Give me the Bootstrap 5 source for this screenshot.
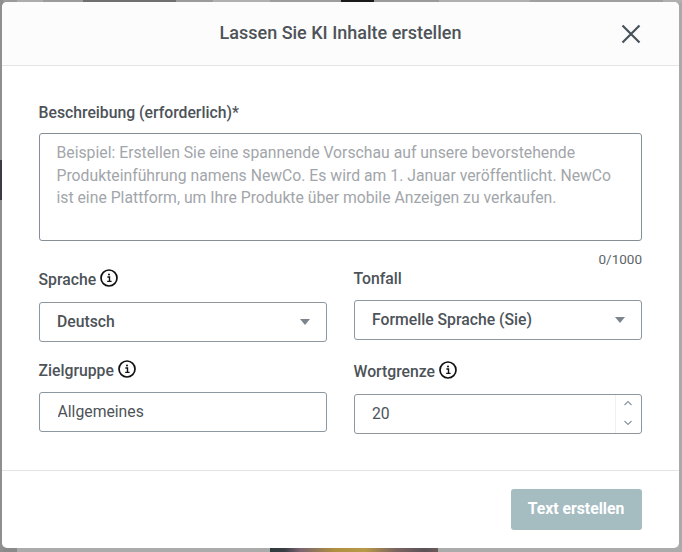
<!DOCTYPE html>
<html lang="de">
<head>
<meta charset="utf-8">
<title>Lassen Sie KI Inhalte erstellen</title>
<link href="https://cdn.jsdelivr.net/npm/bootstrap@5.3.0/dist/css/bootstrap.min.css" rel="stylesheet">
<style>
html,body{height:552px;overflow:hidden}
body{background:#a9a9a9;font-family:Roboto,"Liberation Sans",sans-serif;color:#4d5358;position:relative}
.bg-strip{position:absolute;display:block}
.s1{left:0;top:0;width:682px;height:3px;background:linear-gradient(90deg,#9a9a9a 0 17px,#adadad 17px 43px,#9b9b9b 43px 83px,#6f6f6f 83px 176px,#9b9b9b 176px 213px,#b0b0b0 213px 270px,#9d9d9d 270px 341px,#1a1a1a 341px 374px,#9b9b9b 374px 439px,#b0b0b0 439px 530px,#a0a0a0 530px 663px,#b0b0b0 663px)}
.s2{left:0;top:546px;width:682px;height:6px;background:linear-gradient(90deg,#8a8a8a 0 17px,#ababab 17px 270px,#2e3a3e 270px,#3a3f46 285px,#7a6470 300px,#b0903f 335px,#b89a48 365px,#7c6560 395px,#5a5258 425px,#6d5a5a 438px,#ababab 438px)}
.s3{left:0;top:0;width:3px;height:552px;background:linear-gradient(180deg,#8f8f8f 0 160px,#3c3c46 160px 200px,#8f8f8f 200px)}
.dlg{position:absolute;left:2px;top:2px;width:677px;height:546px;background:#fff;border-radius:5px;display:flex;flex-direction:column}
.dlg-head{height:64px;background:#fcfcfc;border-bottom:1px solid #e4e4e4;border-radius:5px 5px 0 0;flex:none;position:relative}
.dlg-title{font-size:18px;font-weight:500;color:#4d5358;line-height:62px;margin:0}
.dlg-x{position:absolute;left:619px;top:22px;padding:0;background:none;border:0;line-height:0}
.dlg-body{flex:1;padding:36px 37px 0 36.5px}
.lbl{font-size:15.75px;font-weight:500;color:#4d5358;line-height:18px;height:20px;padding-top:2px;margin:0;display:flex;align-items:center;gap:4px}
.lbl svg{position:relative;top:-2px}
.ta{display:block;width:603px;height:108px;margin-top:11px;border:1px solid #868e96;border-radius:3px;padding:8px 17px;font-size:15.75px;line-height:22.5px;resize:none;background:#fff}
.ta::placeholder{color:#a2a6aa;opacity:1}
.cnt{text-align:right;font-size:13.5px;line-height:16px;color:#5e6469;margin-top:10px;margin-bottom:1px}
.fcols{gap:27px}
.fcol{width:288px}
.push-top{padding-top:1px}
.m-11{margin-top:13px}
.m-12{margin-top:12px}
.m-18{margin-top:18px}
.m-21{margin-top:21px}
.fld{height:40px;border:1px solid #8d979f;border-radius:3px;font-size:15.75px;color:#4d5358;display:flex;align-items:center;padding:0 14px 0 17.5px;background:#fff;width:100%}
.fld.sel{font-weight:500;justify-content:space-between}
.fld input{border:0;outline:0;width:100%;padding:0 0 0 .5px;color:inherit;font:inherit}
.caret{width:0;height:0;border-left:5px solid transparent;border-right:5px solid transparent;border-top:6px solid #7c858d;margin-right:2px}
.num{padding:0 0 0 17.5px;justify-content:space-between}
.spin{width:26px;height:38px;border-left:1px solid #f0f0f0;display:flex;flex-direction:column;justify-content:center;gap:14px;align-items:center;padding-bottom:2px}
.spin svg{display:block}
.dlg-foot{height:78px;border-top:1px solid #e4e4e4;flex:none;display:flex;justify-content:flex-end;padding:18px 37.5px 0 0}
.go{width:131px;height:41px;background:#a5bcc1;border:0;border-radius:3px;color:#fff;font-size:15.75px;font-weight:700;padding:0 0 2px}
.go:disabled{background:#a5bcc1;color:#fff;opacity:1}
</style>
</head>
<body>
<span class="bg-strip s1"></span><span class="bg-strip s2"></span><span class="bg-strip s3"></span>
<div class="dlg" role="dialog">
  <div class="dlg-head text-center">
    <h5 class="dlg-title">Lassen Sie KI Inhalte erstellen</h5>
    <button class="dlg-x" type="button" aria-label="Schließen"><svg width="20" height="20" viewBox="0 0 20 20"><path d="M1.5 1.5l17 17M18.5 1.5l-17 17" stroke="#47535b" stroke-width="2.2" fill="none"/></svg></button>
  </div>
  <div class="dlg-body">
    <label class="lbl" for="t1">Beschreibung (erforderlich)*</label>
    <textarea class="ta" id="t1" placeholder="Beispiel: Erstellen Sie eine spannende Vorschau auf unsere bevorstehende Produkteinführung namens NewCo. Es wird am 1. Januar veröffentlicht. NewCo ist eine Plattform, um Ihre Produkte über mobile Anzeigen zu verkaufen."></textarea>
    <div class="cnt">0/1000</div>
    <div class="d-flex fcols">
      <div class="fcol push-top">
        <div class="lbl">Sprache <svg width="18" height="18" viewBox="0 0 18 18"><circle cx="9" cy="9" r="8" fill="none" stroke="#111" stroke-width="1.7"/><path d="M7.4 8h2.1v4.2M7.2 12.4h4.4" fill="none" stroke="#111" stroke-width="1.4"/><circle cx="9" cy="5.6" r="1" fill="#111"/></svg></div>
        <div class="fld sel m-11"><span>Deutsch</span><i class="caret"></i></div>
        <div class="lbl m-18">Zielgruppe <svg width="18" height="18" viewBox="0 0 18 18"><circle cx="9" cy="9" r="8" fill="none" stroke="#111" stroke-width="1.7"/><path d="M7.4 8h2.1v4.2M7.2 12.4h4.4" fill="none" stroke="#111" stroke-width="1.4"/><circle cx="9" cy="5.6" r="1" fill="#111"/></svg></div>
        <div class="fld m-12"><input type="text" value="Allgemeines" aria-label="Zielgruppe"></div>
      </div>
      <div class="fcol">
        <div class="lbl">Tonfall</div>
        <div class="fld sel m-12"><span>Formelle Sprache (Sie)</span><i class="caret"></i></div>
        <div class="lbl m-21">Wortgrenze <svg width="18" height="18" viewBox="0 0 18 18"><circle cx="9" cy="9" r="8" fill="none" stroke="#111" stroke-width="1.7"/><path d="M7.4 8h2.1v4.2M7.2 12.4h4.4" fill="none" stroke="#111" stroke-width="1.4"/><circle cx="9" cy="5.6" r="1" fill="#111"/></svg></div>
        <div class="fld num m-11"><span>20</span><span class="spin"><svg width="10" height="6" viewBox="0 0 10 6"><path d="M1.5 5l3.5-3.5 3.5 3.5" fill="none" stroke="#8d979f" stroke-width="1.2"/></svg><svg width="10" height="6" viewBox="0 0 10 6"><path d="M1.5 1l3.5 3.5 3.5-3.5" fill="none" stroke="#8d979f" stroke-width="1.2"/></svg></span></div>
      </div>
    </div>
  </div>
  <div class="dlg-foot"><button class="btn go" type="button" disabled>Text erstellen</button></div>
</div>
<script src="https://cdn.jsdelivr.net/npm/bootstrap@5.3.0/dist/js/bootstrap.bundle.min.js"></script>
</body>
</html>
